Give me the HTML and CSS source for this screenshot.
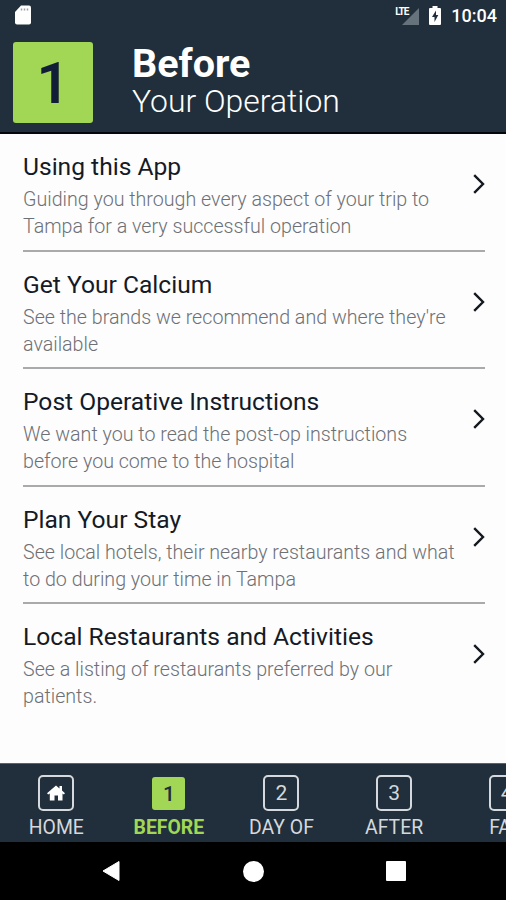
FILE: index.html
```
<!DOCTYPE html>
<html lang="en">
<head>
    <meta charset="UTF-8">
    <meta name="viewport" content="width=device-width, initial-scale=1.0">
    <title>Before Your Operation</title>
    <link rel="stylesheet" href="styles.css">
</head>
<body>

<div class="app">
    <div class="status-bar">
        <svg class="sd-card" width="16" height="20" viewBox="0 0 16 20">
            <path d="M6 0.500h8a2 2 0 0 1 2 2V17.500a2 2 0 0 1-2 2H2a2 2 0 0 1-2-2V7z" fill="#fff"/>
            <path d="M6.500 3.500v2M9.500 3.500v2M12.500 3.500v2" stroke="#9aa2a8" stroke-width="1.500"/>
        </svg>
        <div class="status-right">
            <span class="lte">LTE</span>
            <svg class="signal" width="17" height="17" viewBox="0 0 17 17">
                <path d="M17 0v17H0z" fill="#66727c"/>
            </svg>
            <svg class="battery" width="12" height="19" viewBox="0 0 12 19">
                <path d="M3.500 0h5v2H11a1 1 0 0 1 1 1v15a1 1 0 0 1-1 1H1a1 1 0 0 1-1-1V3a1 1 0 0 1 1-1h2.500z" fill="#fff"/>
                <path d="M7 4.500L3 11h2.500v5L9.300 9H7z" fill="#202f3b"/>
            </svg>
            <span class="clock">10:04</span>
        </div>
    </div>

    <header class="header">
        <div class="step">1</div>
        <div class="heading">
            <h1>Before</h1>
            <h2>Your Operation</h2>
        </div>
    </header>

    <main class="list">
        <div class="item">
            <div class="item-text">
                <h3>Using this App</h3>
                <p>Guiding you through every aspect of your trip to<br>Tampa for a very successful operation</p>
            </div>
            <svg class="chevron" width="12" height="20" viewBox="0 0 12 20"><path d="M1.200 1.200L10 10L1.200 18.800"/></svg>
        </div>
        <div class="item">
            <div class="item-text">
                <h3>Get Your Calcium</h3>
                <p>See the brands we recommend and where they're<br>available</p>
            </div>
            <svg class="chevron" width="12" height="20" viewBox="0 0 12 20"><path d="M1.200 1.200L10 10L1.200 18.800"/></svg>
        </div>
        <div class="item">
            <div class="item-text">
                <h3>Post Operative Instructions</h3>
                <p>We want you to read the post-op instructions<br>before you come to the hospital</p>
            </div>
            <svg class="chevron" width="12" height="20" viewBox="0 0 12 20"><path d="M1.200 1.200L10 10L1.200 18.800"/></svg>
        </div>
        <div class="item">
            <div class="item-text">
                <h3>Plan Your Stay</h3>
                <p>See local hotels, their nearby restaurants and what<br>to do during your time in Tampa</p>
            </div>
            <svg class="chevron" width="12" height="20" viewBox="0 0 12 20"><path d="M1.200 1.200L10 10L1.200 18.800"/></svg>
        </div>
        <div class="item">
            <div class="item-text">
                <h3>Local Restaurants and Activities</h3>
                <p>See a listing of restaurants preferred by our<br>patients.</p>
            </div>
            <svg class="chevron" width="12" height="20" viewBox="0 0 12 20"><path d="M1.200 1.200L10 10L1.200 18.800"/></svg>
        </div>
    </main>

    <nav class="tabs">
        <div class="tab">
            <div class="tab-icon">
                <svg width="18" height="16" viewBox="0 0 18 16">
                    <path d="M9 0.500L12.500 3.500V1H15v4.600L18 8.200L16.800 9.500L15.500 8.500V15.500H11V10.500H7.500V15.500H2.800V8.500L1.200 9.500L0 8.200z" fill="#fff"/>
                </svg>
            </div>
            <span>HOME</span>
        </div>
        <div class="tab active">
            <div class="tab-icon">1</div>
            <span>BEFORE</span>
        </div>
        <div class="tab">
            <div class="tab-icon">2</div>
            <span>DAY OF</span>
        </div>
        <div class="tab">
            <div class="tab-icon">3</div>
            <span>AFTER</span>
        </div>
        <div class="tab">
            <div class="tab-icon">4</div>
            <span>FAQ</span>
        </div>
    </nav>

    <div class="system-nav">
        <svg width="18" height="22" viewBox="0 0 18 22"><path d="M17 1.500v19L1 11z" fill="#fff" stroke="#fff" stroke-linejoin="round"/></svg>
        <div class="nav-home"></div>
        <div class="nav-recent"></div>
    </div>
</div>

</body>
</html>
```
FILE: styles.css
```
* {
    margin: 0;
    padding: 0;
    box-sizing: border-box;
}

body {
    font-family: Roboto, sans-serif;
    background-color: #fdfdfe;
    overflow: hidden;
}

.app {
    width: 506px;
    height: 900px;
    display: flex;
    flex-direction: column;
    overflow: hidden;
}

/* Android status bar */
.status-bar {
    height: 32px;
    padding: 0 9px 0 15px;
    display: flex;
    justify-content: space-between;
    align-items: center;
    background-color: #202f3b;
    color: #fff;
}

.sd-card {
    margin-top: -2px;
}

.status-right {
    display: flex;
    align-items: center;
}

.lte {
    align-self: flex-start;
    margin-right: -7px;
    font-size: 10px;
    line-height: 11px;
    font-weight: 700;
    letter-spacing: -1px;
}

.signal {
    margin-left: 1px;
}

.battery {
    margin: -1px 10px 0 10px;
}

.clock {
    font-size: 18px;
    font-weight: 500;
    line-height: 20px;
}

/* Page header */
.header {
    height: 102px;
    padding: 10px 13px;
    display: flex;
    gap: 39px;
    background-color: #202f3b;
    border-bottom: 2px solid #05080b;
    color: #fff;
}

.step {
    width: 80px;
    height: 81px;
    border-radius: 3px;
    background-color: #a2d755;
    color: #121d38;
    font-size: 58px;
    font-weight: 600;
    line-height: 83px;
    text-align: center;
}

.heading h1 {
    font-size: 39.5px;
    font-weight: 700;
    line-height: 44px;
}

.heading h2 {
    font-size: 31.9px;
    font-weight: 300;
    line-height: 30px;
}

/* Menu list */
.list {
    flex: 1;
    padding: 0 21px 0 23px;
}

.item {
    height: 117.6px;
    padding-top: 16px;
    display: flex;
    justify-content: space-between;
    border-bottom: 2px solid #a9aaac;
}

.item:last-child {
    border-bottom: none;
}

.item h3 {
    margin-bottom: 3px;
    color: #141a26;
    font-size: 24.6px;
    font-weight: 400;
    line-height: 33px;
    white-space: nowrap;
}

.item p {
    color: #6d7075;
    font-size: 19.65px;
    font-weight: 300;
    line-height: 27px;
    white-space: nowrap;
}

.chevron {
    margin-top: 24px;
    flex-shrink: 0;
    fill: none;
    stroke: #14181f;
    stroke-width: 2.4;
}

/* Bottom tabs, the last one runs off the right edge */
.tabs {
    height: 79px;
    padding-top: 11px;
    display: flex;
    background-color: #202f3b;
    border-top: 1px solid #59636c;
}

.tab {
    width: 112.6px;
    flex-shrink: 0;
    display: flex;
    flex-direction: column;
    align-items: center;
    color: #d5d8dc;
    font-size: 19.4px;
    line-height: 24px;
}

.tab-icon {
    width: 36px;
    height: 36px;
    margin-bottom: 5px;
    display: flex;
    justify-content: center;
    align-items: center;
    border: 2px solid #d5d8dc;
    border-radius: 5px;
    font-size: 21px;
    line-height: 26px;
}

.active {
    color: #a2d755;
    font-weight: 700;
}

.active .tab-icon {
    width: 33px;
    height: 33px;
    margin: 2px 0 6px;
    border: none;
    border-radius: 3px;
    background-color: #a2d755;
    color: #202f3b;
    font-weight: 500;
}

/* Android navigation buttons */
.system-nav {
    height: 58px;
    padding: 0 100px 0 102px;
    display: flex;
    justify-content: space-between;
    align-items: center;
    background-color: #000;
}

.nav-home {
    width: 21px;
    height: 21px;
    border-radius: 50%;
    background-color: #fff;
}

.nav-recent {
    width: 20px;
    height: 20px;
    border-radius: 1px;
    background-color: #fff;
}
```
